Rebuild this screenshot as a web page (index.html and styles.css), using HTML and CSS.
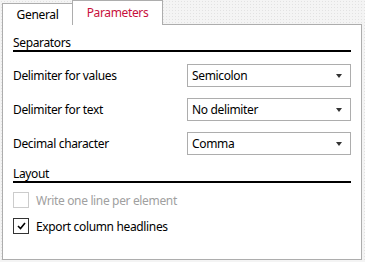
FILE: index.html
```html
<!DOCTYPE html>
<html>
  <head>
    <meta charset="utf-8">
    <title>Parameters</title>
    <link rel="stylesheet" href="styles.css">
  </head>
  <body>
    <div class="dialog">
      <ul class="tabs">
        <li class="tab">General</li>
        <li class="tab active">Parameters</li>
      </ul>
      <div class="panel">
        <div class="group">Separators</div>
        <div class="row">
          <span class="label">Delimiter for values</span>
          <div class="combo"><span>Semicolon</span><i class="arrow"></i></div>
        </div>
        <div class="row">
          <span class="label">Delimiter for text</span>
          <div class="combo"><span>No delimiter</span><i class="arrow"></i></div>
        </div>
        <div class="row">
          <span class="label">Decimal character</span>
          <div class="combo"><span>Comma</span><i class="arrow"></i></div>
        </div>
        <div class="group layout">Layout</div>
        <label class="check disabled"><span class="box"></span>Write one line per element</label>
        <label class="check"><span class="box">
          <svg width="9" height="8" viewBox="0 0 9 8"><path d="M1 4 L3.5 6.5 L8 1" fill="none" stroke="#000" stroke-width="1.6"/></svg>
        </span>Export column headlines</label>
      </div>
    </div>
  </body>
</html>
```

FILE: styles.css
```css
*{
  margin: 0;
  padding: 0;
  box-sizing: border-box;
}
body{
  width: 365px;
  height: 262px;
  overflow: hidden;
  font-family: "Noto Sans", "Open Sans", sans-serif;
  font-size: 12px;
  letter-spacing: -0.35px;
  color: #000;
  background-color: #f4f4f4;
  background-image: radial-gradient(#e2e2e2 0.6px, transparent 0.7px);
  background-size: 3px 3px;
}
.dialog{
  padding: 0 3px 0 2px;
}
.tabs{
  list-style: none;
  display: flex;
  height: 24px;
  align-items: flex-end;
}
.tab{
  height: 22px;
  width: 71px;
  border: 1px solid #adadad;
  border-bottom: none;
  background: #fff;
  text-align: center;
  line-height: 22px;
  position: relative;
  top: 1px;
}
.tab.active{
  height: 25px;
  width: 91px;
  margin-left: -1px;
  color: #c8103c;
  line-height: 24px;
  z-index: 1;
}
.panel{
  background: #fff;
  border: 1px solid #adadad;
  height: 236px;
  padding: 10px 10px 0 10px;
}
.group{
  border-bottom: 2px solid #000;
  line-height: 15px;
  margin-bottom: 12px;
}
.group.layout{
  margin-top: 5px;
  margin-bottom: 9px;
}
.row{
  display: flex;
  align-items: center;
  justify-content: space-between;
  height: 22px;
  margin-bottom: 12px;
}
.combo{
  width: 164px;
  height: 23px;
  border: 1px solid #adadad;
  display: flex;
  align-items: center;
  justify-content: space-between;
  padding: 0 8px 0 4px;
}
.arrow{
  width: 0;
  height: 0;
  border-left: 3.5px solid transparent;
  border-right: 3.5px solid transparent;
  border-top: 4px solid #333;
  margin-top: 1px;
}
.check{
  display: flex;
  align-items: center;
  height: 16px;
  margin-bottom: 10px;
}
.check .box{
  width: 16px;
  height: 16px;
  border: 1px solid #333;
  margin-right: 7px;
  display: flex;
  align-items: center;
  justify-content: center;
  background: #fff;
}
.check.disabled{
  color: #a0a0a0;
}
.check.disabled .box{
  border-color: #ccc;
}
```
